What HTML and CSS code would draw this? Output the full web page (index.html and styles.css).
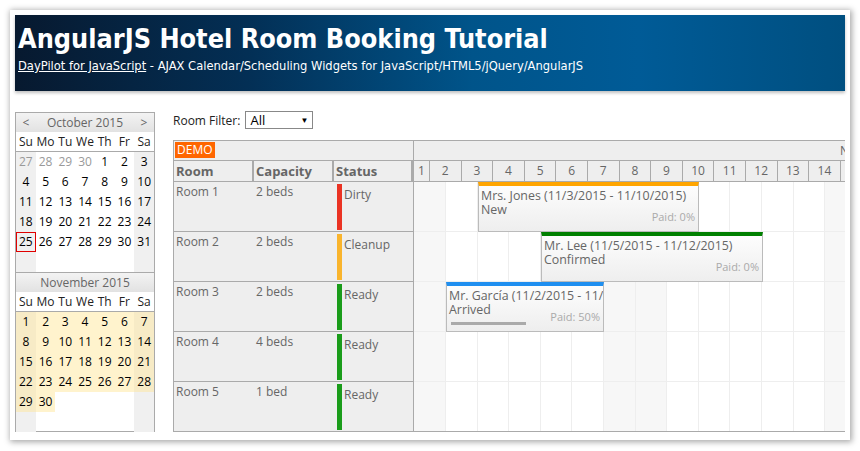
FILE: index.html
```html
<!DOCTYPE html>
<html lang="en">
<head>
  <meta charset="UTF-8" />
  <title>AngularJS Hotel Room Booking Tutorial</title>
  <link rel="stylesheet" href="styles.css">
</head>
<body>

<div class="frame">
  <div class="header">
    <h1>AngularJS Hotel Room Booking Tutorial</h1>
    <p><a href="#">DayPilot for JavaScript</a> - AJAX Calendar/Scheduling Widgets for JavaScript/HTML5/jQuery/AngularJS</p>
  </div>

  <div class="main">
    <div class="nav">
      <div class="month">
        <div class="month-title"><span class="arrow">&lt;</span>October 2015<span class="arrow">&gt;</span></div>
        <div class="daynames"><div>Su</div><div>Mo</div><div>Tu</div><div>We</div><div>Th</div><div>Fr</div><div>Sa</div></div>
        <div class="days" id="oct"></div>
      </div>
      <div class="month">
        <div class="month-title">November 2015</div>
        <div class="daynames"><div>Su</div><div>Mo</div><div>Tu</div><div>We</div><div>Th</div><div>Fr</div><div>Sa</div></div>
        <div class="days" id="nov"></div>
      </div>
    </div>

    <div class="content">
      <div class="filter">
        <span>Room Filter:</span>
        <div class="select">All <span class="caret">&#9660;</span></div>
      </div>

      <div class="scheduler">
        <div class="rowheader">
          <div class="corner"><span class="demo">DEMO</span></div>
          <div class="cols">
            <div>Room</div><div>Capacity</div><div>Status</div>
          </div>
          <div class="room"><div>Room 1</div><div>2 beds</div><div class="status"><i class="dirty"></i><span>Dirty</span></div></div>
          <div class="room"><div>Room 2</div><div>2 beds</div><div class="status"><i class="cleanup"></i><span>Cleanup</span></div></div>
          <div class="room"><div>Room 3</div><div>2 beds</div><div class="status"><i class="ready"></i><span>Ready</span></div></div>
          <div class="room"><div>Room 4</div><div>4 beds</div><div class="status"><i class="ready"></i><span>Ready</span></div></div>
          <div class="room"><div>Room 5</div><div>1 bed</div><div class="status"><i class="ready"></i><span>Ready</span></div></div>
        </div>

        <div class="timeline">
          <div class="month-row">November 2015</div>
          <div class="day-row" id="dayrow"></div>
          <div class="cells" id="cells">
            <div class="event new" style="left: 64px; top: 0; width: 221px;">
              Mrs. Jones (11/3/2015 - 11/10/2015)<br>New
              <span class="paid">Paid: 0%</span>
            </div>
            <div class="event confirmed" style="left: 127px; top: 50px; width: 222px;">
              Mr. Lee (11/5/2015 - 11/12/2015)<br>Confirmed
              <span class="paid">Paid: 0%</span>
            </div>
            <div class="event arrived" style="left: 32px; top: 100px; width: 158px;">
              Mr. García (11/2/2015 - 11/9/2015)<br>Arrived
              <span class="paid">Paid: 50%</span>
              <span class="progress" style="width: 75px;"></span>
            </div>
          </div>
        </div>
      </div>
    </div>
  </div>
</div>

<script>
  function buildMonth(id, year, month, today, selFrom, selTo) {
    let box = document.getElementById(id);
    let first = new Date(year, month, 1);
    let start = new Date(year, month, 1 - first.getDay());

    for (let i = 0; i < 42; i++) {
      let d = new Date(start.getFullYear(), start.getMonth(), start.getDate() + i);
      let cell = document.createElement("div");
      let col = i % 7;
      let inMonth = d.getMonth() === month;
      let before = d < first;

      cell.className = "day";
      if (col === 0 || col === 6) cell.classList.add("weekend");
      if (inMonth || before) cell.textContent = d.getDate();
      if (before) cell.classList.add("other");
      if (inMonth && selFrom && d >= selFrom && d <= selTo) cell.classList.add("selected");
      if (today && d.getTime() === today.getTime()) cell.classList.add("today");
      box.appendChild(cell);
    }
  }

  buildMonth("oct", 2015, 9, new Date(2015, 9, 25));
  buildMonth("nov", 2015, 10, null, new Date(2015, 10, 1), new Date(2015, 10, 30));

  let dayrow = document.getElementById("dayrow");
  for (let i = 1; i <= 14; i++) {
    let c = document.createElement("div");
    c.textContent = i;
    dayrow.appendChild(c);
  }

  let cells = document.getElementById("cells");
  let firstEvent = cells.querySelector(".event");
  let shaded = [0, 6, 7, 13];
  for (let r = 0; r < 5; r++) {
    for (let c = 0; c < 14; c++) {
      let cell = document.createElement("div");
      cell.className = "cell" + (shaded.includes(c) ? " off" : "");
      cells.insertBefore(cell, firstEvent);
    }
  }
</script>

</body>
</html>
```

FILE: styles.css
```css
body {
    margin: 0;
    background-color: #ffffff;
    font-family: "Open Sans", Arial, sans-serif;
    font-size: 12px;
    color: #333;
}

.frame {
    margin: 10px;
    width: 840px;
    height: 430px;
    box-sizing: border-box;
    padding: 5px;
    background-color: white;
    box-shadow: 1px 1px 6px 1px rgba(0, 0, 0, 0.35);
    overflow: hidden;
}

.header {
    height: 76px;
    box-sizing: border-box;
    padding: 8px 3px 0;
    color: white;
    background: linear-gradient(to right, #07192f 0%, #032f55 28%, #00548a 55%, #005b97 75%, #004f80 100%);
    box-shadow: 0 2px 3px rgba(0, 0, 0, 0.25);
    font-family: "DejaVu Sans", Verdana, sans-serif;
    font-stretch: condensed;
}

.header h1 {
    margin: 0;
    font-size: 26.8px;
    line-height: 32px;
    font-weight: bold;
}

.header p {
    margin: 0;
    padding-top: 2px;
    font-size: 12.8px;
    line-height: 18px;
}

.header a {
    color: white;
}

.main {
    display: flex;
    gap: 18px;
    padding-top: 21px;
}

/* navigator */
.nav {
    width: 140px;
    border: 1px solid #aaa;
    border-top: none;
    box-sizing: border-box;
    height: 320px;
}

.month-title {
    display: flex;
    justify-content: center;
    height: 19px;
    line-height: 19px;
    border-top: 1px solid #aaa;
    background: linear-gradient(#f3f3f3, #e2e2e2);
    color: #666;
    font-size: 12px;
}

.month-title .arrow {
    width: 20px;
    text-align: center;
}

.month:first-child .month-title {
    justify-content: space-between;
}

.daynames,
.days {
    display: grid;
    grid-template-columns: repeat(7, 1fr);
}

.daynames {
    height: 19px;
    line-height: 19px;
    border-bottom: 1px solid #aaa;
    text-align: center;
    color: #222;
}

.days {
    grid-auto-rows: 20px;
}

.day {
    text-align: center;
    line-height: 20px;
    color: #000;
    box-sizing: border-box;
}

.day.weekend {
    background-color: #f0f0f0;
}

.day.other {
    color: #999;
}

.day.selected {
    background-color: #fff3cd;
}

.day.selected.weekend {
    background-color: #f7ebc6;
}

.day.today {
    box-shadow: inset 0 0 0 1px #e00000;
}

/* content */
.content {
    width: 672px;
}

.filter {
    display: flex;
    align-items: center;
    gap: 5px;
    height: 18px;
    margin-top: -1px;
    margin-bottom: 11px;
    color: #222;
    font-size: 12px;
}

.select {
    width: 68px;
    height: 18px;
    box-sizing: border-box;
    border: 1px solid #888;
    padding: 0 4px;
    line-height: 16px;
    font-size: 13px;
    color: #000;
    display: flex;
    justify-content: space-between;
}

.select .caret {
    font-size: 8px;
}

/* scheduler */
.scheduler {
    display: flex;
    border-top: 1px solid #aaa;
    border-left: 1px solid #aaa;
    border-bottom: 1px solid #aaa;
    color: #666;
    height: 292px;
    box-sizing: border-box;
}

.rowheader {
    width: 240px;
    box-sizing: border-box;
    flex-shrink: 0;
    border-right: 1px solid #aaa;
    background-color: #eee;
}

.corner,
.month-row {
    height: 19px;
    border-bottom: 1px solid #aaa;
    background-color: #eee;
}

.demo {
    display: inline-block;
    margin: 1px 0 0 1px;
    height: 16px;
    line-height: 16px;
    padding: 0 2px;
    background-color: #ff6600;
    color: white;
    font-size: 12px;
}

.cols {
    display: grid;
    grid-template-columns: 80px 80px 79px;
    height: 20px;
    border-bottom: 1px solid #aaa;
}

.cols div {
    border-right: 2px solid #aaa;
    padding-left: 2px;
    font-weight: bold;
    font-size: 13px;
    line-height: 20px;
}

.room {
    display: grid;
    grid-template-columns: 80px 80px 79px;
    height: 50px;
    box-sizing: border-box;
    border-bottom: 1px solid #aaa;
}

.room:last-child {
    border-bottom: none;
}

.room div {
    padding: 3px 0 0 2px;
    line-height: 14px;
}

.room .status {
    display: flex;
    padding: 2px 0 0 3px;
}

.status i {
    display: block;
    width: 5px;
    height: 46px;
    margin-right: 2px;
    flex-shrink: 0;
}

.status span {
    padding-top: 4px;
}

i.dirty { background-color: #ea3323; }
i.cleanup { background-color: #f9b42d; }
i.ready { background-color: #1a9c1a; }

.timeline {
    flex: 1;
    overflow: hidden;
}

.month-row {
    padding-left: 426px;
    line-height: 19px;
    white-space: nowrap;
}

.day-row {
    display: grid;
    grid-template-columns: 16px repeat(13, 31.6px);
    height: 20px;
    border-bottom: 1px solid #aaa;
    background-color: #eee;
}

.day-row div {
    border-right: 1px solid #aaa;
    text-align: center;
    line-height: 20px;
}

.cells {
    position: relative;
    display: grid;
    grid-template-columns: 32px repeat(13, 31.6px);
    grid-auto-rows: 50px;
}

.cell {
    box-sizing: border-box;
    border-right: 1px solid #eee;
    border-bottom: 1px solid #eee;
    background-color: white;
}

.cell.off {
    background-color: #f7f7f7;
}

.event {
    position: absolute;
    height: 50px;
    box-sizing: border-box;
    border: 1px solid #bbb;
    border-top-width: 4px;
    padding: 3px 2px 0;
    background: linear-gradient(#fdfdfd, #eeeeee);
    color: #666;
    font-size: 12.4px;
    line-height: 14px;
    white-space: nowrap;
    overflow: hidden;
}

.event.new { border-top-color: #ffa500; }
.event.confirmed { border-top-color: #008000; }
.event.arrived { border-top-color: #1f8ff0; }

.event .paid {
    position: absolute;
    right: 3px;
    bottom: 7px;
    color: #aaa;
    font-size: 11px;
}

.event .progress {
    position: absolute;
    left: 4px;
    bottom: 6px;
    height: 3px;
    background-color: #aaa;
}
```
